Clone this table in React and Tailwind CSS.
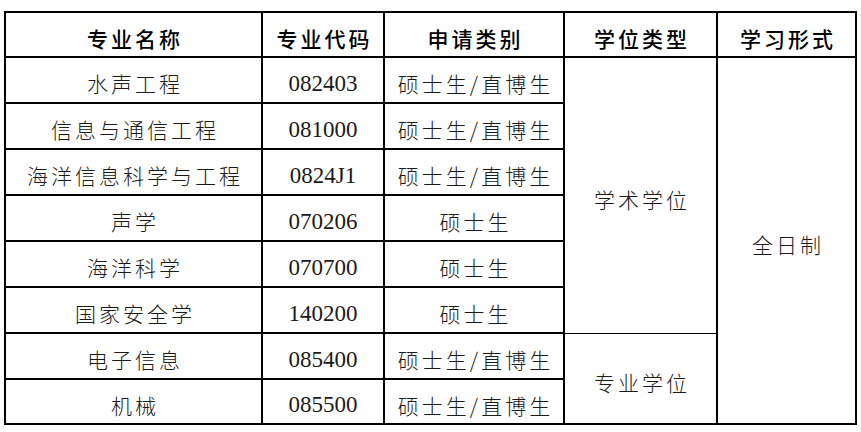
import React from "react";

const cjk = { fontFamily: '"Noto Sans CJK SC", "Noto Sans", sans-serif' };

function Cell({ children, className = "", head = false, num = false }) {
  return (
    <div
      className={
        "bg-white flex items-center justify-center pt-[8px] whitespace-nowrap " +
        (num
          ? "text-[23px] text-[#1a1a1a] "
          : head
          ? "text-[21px] tracking-[3px] pl-[3px] font-medium text-black "
          : "text-[21px] tracking-[3px] pl-[3px] font-light text-[#1a1a1a] ") +
        className
      }
      style={num ? { fontFamily: '"Liberation Serif", "Times New Roman", serif' } : cjk}
    >
      {children}
    </div>
  );
}

const rows = [
  ["水声工程", "082403", "硕士生/直博生"],
  ["信息与通信工程", "081000", "硕士生/直博生"],
  ["海洋信息科学与工程", "0824J1", "硕士生/直博生"],
  ["声学", "070206", "硕士生"],
  ["海洋科学", "070700", "硕士生"],
  ["国家安全学", "140200", "硕士生"],
  ["电子信息", "085400", "硕士生/直博生"],
  ["机械", "085500", "硕士生/直博生"],
];

export default function App() {
  return (
    <div className="w-[861px] h-[432px] bg-white pt-[11px] pl-[4px]">
      <div className="inline-grid bg-black p-[2px] gap-[2px] grid-cols-[255px_120px_178px_151px_137px] grid-rows-[43px_44px_44px_44px_44px_44px_44px_44px_43px]">
        <Cell head className="col-start-1 row-start-1">专业名称</Cell>
        <Cell head className="col-start-2 row-start-1">专业代码</Cell>
        <Cell head className="col-start-3 row-start-1">申请类别</Cell>
        <Cell head className="col-start-4 row-start-1">学位类型</Cell>
        <Cell head className="col-start-5 row-start-1">学习形式</Cell>
        {rows.map((r, i) => (
          <React.Fragment key={i}>
            <Cell className="col-start-1" >{r[0]}</Cell>
            <Cell num className="col-start-2">{r[1]}</Cell>
            <Cell className="col-start-3">{r[2]}</Cell>
          </React.Fragment>
        ))}
        <Cell className="col-start-4 row-start-2 row-span-6 mb-[-1px]">学术学位</Cell>
        <Cell className="col-start-4 row-start-8 row-span-2">专业学位</Cell>
        <Cell className="col-start-5 row-start-2 row-span-8">全日制</Cell>
      </div>
    </div>
  );
}
